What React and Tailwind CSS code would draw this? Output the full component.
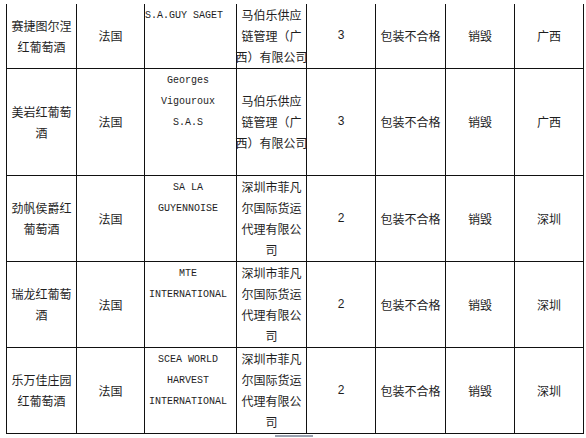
// App.jsx - 进口葡萄酒不合格信息表（截图复刻）
const rows = [
  {
    name: ['赛捷图尔涅', '红葡萄酒'],
    en: ['S.A.GUY SAGET'],
    enLeft: true,
    co: ['马伯乐供应', '链管理（广', '西）有限公司'],
    n: 3,
    port: '广西',
    h: 'h-[64px]',
  },
  {
    name: ['美岩红葡萄', '酒'],
    en: ['Georges', 'Vigouroux', 'S.A.S'],
    co: ['马伯乐供应', '链管理（广', '西）有限公司'],
    n: 3,
    port: '广西',
    h: 'h-[107px]',
  },
  {
    name: ['劲帆侯爵红', '葡萄酒'],
    en: ['SA LA', 'GUYENNOISE'],
    co: ['深圳市菲凡', '尔国际货运', '代理有限公', '司'],
    n: 2,
    port: '深圳',
    h: 'h-[86px]',
  },
  {
    name: ['瑞龙红葡萄', '酒'],
    en: ['MTE', 'INTERNATIONAL'],
    co: ['深圳市菲凡', '尔国际货运', '代理有限公', '司'],
    n: 2,
    port: '深圳',
    h: 'h-[86px]',
  },
  {
    name: ['乐万佳庄园', '红葡萄酒'],
    en: ['SCEA WORLD', 'HARVEST', 'INTERNATIONAL'],
    co: ['深圳市菲凡', '尔国际货运', '代理有限公', '司'],
    n: 2,
    port: '深圳',
    h: 'h-[86px]',
  },
];

const cjk = { fontFamily: '"Noto Sans CJK SC", sans-serif' };
const mono = { fontFamily: '"Liberation Mono", monospace' };

const Lines = ({ items }) =>
  items.map((t, i) => (
    <div key={i} className="whitespace-nowrap">
      {t}
    </div>
  ));

export default function App() {
  const td = 'border border-[#111] p-0 align-middle text-center';
  return (
    <div className="w-[586px] h-[438px] bg-white pt-[4px] pl-[6px] overflow-hidden">
      <table
        className="table-fixed border-collapse w-[577px] text-[12px] leading-[21px] text-[#1e1e1e]"
        style={cjk}
      >
        <colgroup>
          <col className="w-[70px]" />
          <col className="w-[68px]" />
          <col className="w-[92px]" />
          <col className="w-[70px]" />
          <col className="w-[69px]" />
          <col className="w-[70px]" />
          <col className="w-[69px]" />
          <col className="w-[69px]" />
        </colgroup>
        <tbody>
          {rows.map((r, i) => (
            <tr key={i} className={`${r.h} ${i === 0 ? '[&>td]:border-t-0' : ''}`}>
              <td className={td}>
                <Lines items={r.name} />
              </td>
              <td className={td}>法国</td>
              <td
                className={`border border-[#111] p-0 align-top pt-[1px] text-[10px] leading-[21px] ${
                  r.enLeft ? 'text-left pl-0' : 'text-center pr-[5px]'
                }`}
                style={mono}
              >
                <Lines items={r.en} />
              </td>
              <td className={`${td} overflow-visible`}>
                <div className="-mx-[2px]">
                  <Lines items={r.co} />
                </div>
              </td>
              <td className={`${td} text-[12px]`} style={{ fontFamily: '"Liberation Sans", sans-serif' }}>
                {r.n}
              </td>
              <td className={td}>包装不合格</td>
              <td className={td}>销毁</td>
              <td className={td}>{r.port}</td>
            </tr>
          ))}
        </tbody>
      </table>
      <div className="ml-[269px] mt-[1px] w-[38px] h-[2px] bg-gray-400" />
    </div>
  );
}
